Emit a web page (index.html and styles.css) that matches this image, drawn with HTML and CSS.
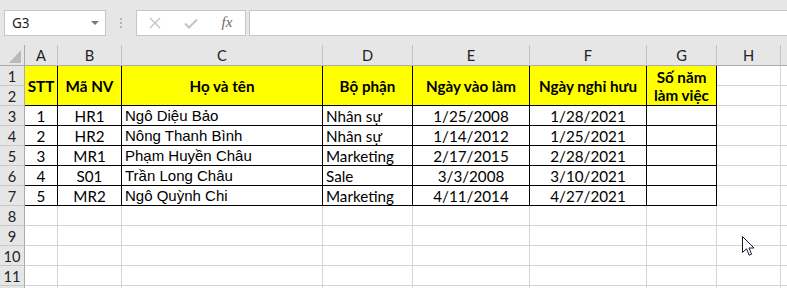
FILE: index.html
```html
<!DOCTYPE html>
<html lang="vi">
<head>
  <meta charset="UTF-8" />
  <title>Danh sách nhân viên</title>
  <link rel="stylesheet" href="styles.css">
</head>
<body>
  <div class="bar">
    <div class="namebox">
      <span>G3</span>
      <span class="drop"></span>
    </div>
    <div class="grip"><i></i><i></i><i></i></div>
    <div class="fbtns">
      <span class="fbtn">
        <svg width="12" height="12" viewBox="0 0 12 12"><path d="M1 1 L11 11 M11 1 L1 11" stroke="#c4c4c4" stroke-width="1.4" fill="none"/></svg>
      </span>
      <span class="fbtn">
        <svg width="14" height="11" viewBox="0 0 14 11"><path d="M1 5.5 L5 9.5 L13 1.5" stroke="#c4c4c4" stroke-width="2" fill="none"/></svg>
      </span>
      <span class="fbtn fx">fx</span>
    </div>
    <div class="finput"></div>
  </div>

  <div class="sheet">
    <div class="hd corner"><span class="tri"></span></div>
    <div class="hd">A</div><div class="hd">B</div><div class="hd">C</div><div class="hd">D</div>
    <div class="hd">E</div><div class="hd">F</div><div class="hd">G</div><div class="hd">H</div><div class="hd last"></div>

    <div class="rh">1</div>
    <div class="c t th">STT</div>
    <div class="c t th">Mã NV</div>
    <div class="c t th">Họ và tên</div>
    <div class="c t th">Bộ phận</div>
    <div class="c t th">Ngày vào làm</div>
    <div class="c t th">Ngày nghỉ hưu</div>
    <div class="c t th">Số năm<br>làm việc</div>
    <div class="c"></div><div class="c"></div>

    <div class="rh">2</div>
    <div class="c"></div><div class="c"></div>

    <div class="rh">3</div>
    <div class="c t ctr">1</div><div class="c t ctr">HR1</div><div class="c t name">Ngô Diệu Bảo</div><div class="c t">Nhân sự</div>
    <div class="c t ctr">1/25/2008</div><div class="c t ctr">1/28/2021</div><div class="c t"></div><div class="c"></div><div class="c"></div>

    <div class="rh">4</div>
    <div class="c t ctr">2</div><div class="c t ctr">HR2</div><div class="c t name">Nông Thanh Bình</div><div class="c t">Nhân sự</div>
    <div class="c t ctr">1/14/2012</div><div class="c t ctr">1/25/2021</div><div class="c t"></div><div class="c"></div><div class="c"></div>

    <div class="rh">5</div>
    <div class="c t ctr">3</div><div class="c t ctr">MR1</div><div class="c t name">Phạm Huyền Châu</div><div class="c t">Marketing</div>
    <div class="c t ctr">2/17/2015</div><div class="c t ctr">2/28/2021</div><div class="c t"></div><div class="c"></div><div class="c"></div>

    <div class="rh">6</div>
    <div class="c t ctr">4</div><div class="c t ctr">S01</div><div class="c t name">Trần Long Châu</div><div class="c t">Sale</div>
    <div class="c t ctr">3/3/2008</div><div class="c t ctr">3/10/2021</div><div class="c t"></div><div class="c"></div><div class="c"></div>

    <div class="rh">7</div>
    <div class="c t ctr">5</div><div class="c t ctr">MR2</div><div class="c t name">Ngô Quỳnh Chi</div><div class="c t">Marketing</div>
    <div class="c t ctr">4/11/2014</div><div class="c t ctr">4/27/2021</div><div class="c t"></div><div class="c"></div><div class="c"></div>

    <div class="rh">8</div>
    <div class="c"></div><div class="c"></div><div class="c"></div><div class="c"></div><div class="c"></div>
    <div class="c"></div><div class="c"></div><div class="c"></div><div class="c"></div>

    <div class="rh">9</div>
    <div class="c"></div><div class="c"></div><div class="c"></div><div class="c"></div><div class="c"></div>
    <div class="c"></div><div class="c"></div><div class="c"></div><div class="c"></div>

    <div class="rh">10</div>
    <div class="c"></div><div class="c"></div><div class="c"></div><div class="c"></div><div class="c"></div>
    <div class="c"></div><div class="c"></div><div class="c"></div><div class="c"></div>

    <div class="rh">11</div>
    <div class="c"></div><div class="c"></div><div class="c"></div><div class="c"></div><div class="c"></div>
    <div class="c"></div><div class="c"></div><div class="c"></div><div class="c"></div>

    <div class="rh"></div>
    <div class="c"></div><div class="c"></div><div class="c"></div><div class="c"></div><div class="c"></div>
    <div class="c"></div><div class="c"></div><div class="c"></div><div class="c"></div>
  </div>

  <!-- con trỏ chuột -->
  <svg class="cursor" width="13" height="21" viewBox="0 0 13 21">
    <path d="M0.5 0.5 L0.5 16.5 L4.5 12.8 L7.2 19.2 L9.6 18.2 L7 12 L12 12 Z" fill="#fff" stroke="#1a1a2e" stroke-width="1"/>
  </svg>
</body>
</html>
```

FILE: styles.css
```css
body { margin: 0; background: #fff; overflow: hidden; font-family: "Lato", "Noto Sans", sans-serif; }

.bar {
  height: 45px;
  background: #e6e6e6;
  display: flex;
  align-items: flex-start;
  padding: 10px 0 0 4px;
  box-sizing: border-box;
}
.namebox {
  width: 102px;
  height: 26px;
  box-sizing: border-box;
  background: #fff;
  border: 1px solid #c6c6c6;
  display: flex;
  align-items: center;
  justify-content: space-between;
  padding: 0 6px 0 7px;
  font-family: "Noto Sans", sans-serif;
  font-size: 13.5px;
  color: #1e1e1e;
}
.drop {
  width: 0; height: 0;
  border-left: 4px solid transparent;
  border-right: 4px solid transparent;
  border-top: 4px solid #7a7a7a;
}
.grip {
  width: 30px;
  height: 26px;
  display: flex;
  flex-direction: column;
  align-items: center;
  justify-content: center;
  gap: 2px;
}
.grip i { width: 2px; height: 2px; background: #b4b4b4; }
.fbtns {
  width: 110px;
  height: 26px;
  box-sizing: border-box;
  background: #fff;
  border: 1px solid #c6c6c6;
  display: flex;
}
.fbtn {
  width: 36px;
  display: flex;
  align-items: center;
  justify-content: center;
}
.fx {
  font-family: "Liberation Serif", serif;
  font-style: italic;
  font-size: 15px;
  color: #6b6b6b;
  padding-bottom: 2px;
}
.finput {
  flex: 1;
  height: 26px;
  margin-left: 3px;
  box-sizing: border-box;
  background: #fff;
  border: 1px solid #c6c6c6;
  border-right: none;
}

.sheet {
  display: grid;
  grid-template-columns: 25px 33px 64px 201px 90px 117px 117px 70px 64px 1fr;
  grid-template-rows: 21px;
  grid-auto-rows: 20px;
  font-size: 15.2px;
  color: #000;
}
.hd {
  background: #e6e6e6;
  border-right: 1px solid #c2c2c2;
  border-bottom: 1px solid #ababab;
  text-align: center;
  line-height: 22px;
  font-size: 14.67px;
  color: #222;
}
.hd.last { border-right: none; }
.corner { position: relative; border-right-color: #ababab; }
.tri {
  position: absolute;
  right: 3px;
  bottom: 2px;
  width: 0; height: 0;
  border-left: 12px solid transparent;
  border-bottom: 13px solid #b9b9b9;
}
.rh {
  background: #e6e6e6;
  border-right: 1px solid #ababab;
  border-bottom: 1px solid #c8c8c8;
  text-align: center;
  line-height: 21px;
  font-size: 14.67px;
  color: #222;
}
.c {
  border-right: 1px solid #d4d4d4;
  border-bottom: 1px solid #d4d4d4;
  line-height: 20px;
  padding: 0 3px;
  white-space: nowrap;
  overflow: hidden;
}
.t { border-color: #000; }
.ctr { text-align: center; }
.name { font-family: "Liberation Sans", Arial, sans-serif; font-size: 15px; }
.th {
  grid-row: span 2;
  background: #ffff00;
  font-weight: bold;
  line-height: 18px;
  display: flex;
  align-items: center;
  justify-content: center;
  text-align: center;
  white-space: normal;
  padding-top: 1px;
}

.cursor { position: absolute; left: 742px; top: 236px; }
```
